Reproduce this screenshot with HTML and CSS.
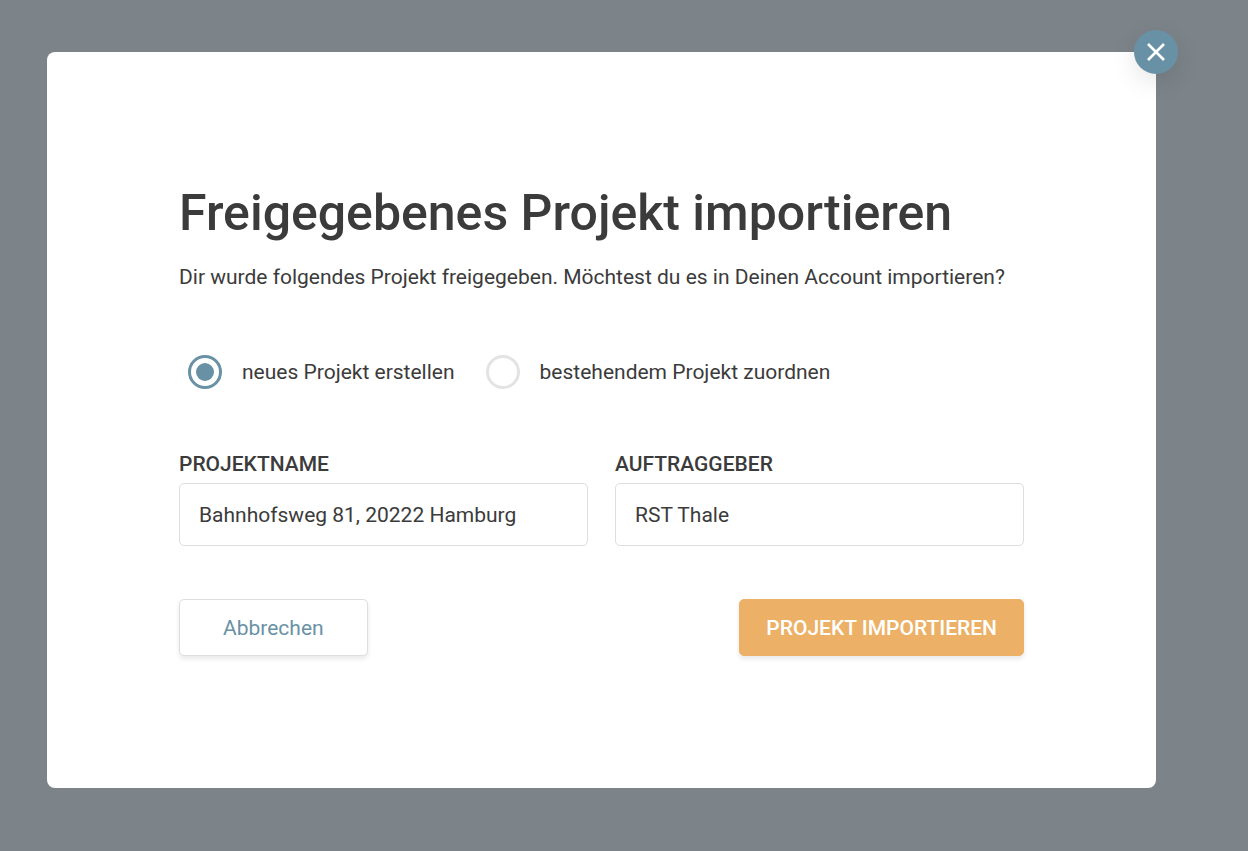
FILE: index.html
```html
<!DOCTYPE html>
<html lang="de">
<head>
<meta charset="utf-8">
<meta name="viewport" content="width=device-width, initial-scale=1">
<title>Freigegebenes Projekt importieren</title>
<link rel="stylesheet" href="styles.css">
</head>
<body>
<main class="dialog" role="dialog" aria-labelledby="title">
  <button class="close" type="button" aria-label="Schließen">
    <svg class="close-icon" viewBox="0 0 20 20" aria-hidden="true"><path d="M2 2 18 18M18 2 2 18"/></svg>
  </button>
  <h1 class="title" id="title">Freigegebenes Projekt importieren</h1>
  <p class="intro">Dir wurde folgendes Projekt freigegeben. Möchtest du es in Deinen Account importieren?</p>
  <form class="form">
    <div class="choices">
      <label class="choice"><input class="radio" type="radio" name="mode" checked>neues Projekt erstellen</label>
      <label class="choice"><input class="radio" type="radio" name="mode">bestehendem Projekt zuordnen</label>
    </div>
    <div class="fields">
      <div class="field">
        <label class="label" for="name">PROJEKTNAME</label>
        <input class="input" id="name" type="text" value="Bahnhofsweg 81, 20222 Hamburg">
      </div>
      <div class="field">
        <label class="label" for="client">AUFTRAGGEBER</label>
        <input class="input" id="client" type="text" value="RST Thale">
      </div>
    </div>
    <div class="actions">
      <button class="button cancel" type="button">Abbrechen</button>
      <button class="button submit" type="button">PROJEKT IMPORTIEREN</button>
    </div>
  </form>
</main>
</body>
</html>
```
FILE: styles.css
```css
* { box-sizing: border-box; }

body {
  margin: 0;
  min-height: 100vh;
  padding: 52px 92px 63px 47px;
  background: #7c8489;
  color: #3b3b3b;
  font-family: Roboto, "Liberation Sans", sans-serif;
  font-size: 21px;
  line-height: 24px;
}

.dialog {
  position: relative;
  padding: 132px;
  background: #fff;
  border-radius: 8px;
}

.close {
  position: absolute;
  top: -22px;
  right: -22px;
  display: grid;
  place-items: center;
  width: 44px;
  height: 44px;
  padding: 0;
  border: 0;
  border-radius: 50%;
  background: #6991a5;
  box-shadow: 0 8px 24px rgba(0, 0, 0, .1);
}

.close-icon {
  width: 20px;
  height: 20px;
  fill: none;
  stroke: #fff;
  stroke-width: 2.6;
}

.title {
  margin: 0;
  font-size: 50px;
  line-height: 58px;
  font-weight: 500;
}

.intro { margin: 23px 0 0; }

.choices {
  display: flex;
  flex-wrap: wrap;
  gap: 31px;
  margin-top: 66px;
  padding-left: 9px;
}

.choice {
  display: flex;
  align-items: center;
  gap: 20px;
}

.radio {
  appearance: none;
  display: grid;
  place-items: center;
  width: 34px;
  height: 34px;
  margin: 0;
  border: 3px solid #e3e3e3;
  border-radius: 50%;
}

.radio:checked { border-color: #6991a5; }

.radio:checked::before {
  content: "";
  width: 18px;
  height: 18px;
  border-radius: 50%;
  background: #6991a5;
}

.fields {
  display: grid;
  grid-template-columns: 1fr 1fr;
  gap: 27px;
  margin-top: 63px;
}

.label {
  display: block;
  margin-bottom: 7px;
  font-weight: 500;
}

.input {
  display: block;
  width: 100%;
  height: 63px;
  padding: 0 19px;
  border: 1px solid #dedede;
  border-radius: 5px;
  background: #fff;
  color: inherit;
  font: inherit;
}

.actions {
  display: flex;
  justify-content: space-between;
  margin-top: 53px;
}

.button {
  height: 57px;
  border: 1px solid #dedede;
  border-radius: 5px;
  background: #fff;
  box-shadow: 0 3px 5px rgba(0, 0, 0, .09);
  font: inherit;
}

.cancel {
  padding: 0 43px;
  color: #6991a5;
}

.submit {
  padding: 0 26px;
  border-color: #ecb166;
  background: #ecb166;
  color: #fff;
  font-weight: 500;
}
```
